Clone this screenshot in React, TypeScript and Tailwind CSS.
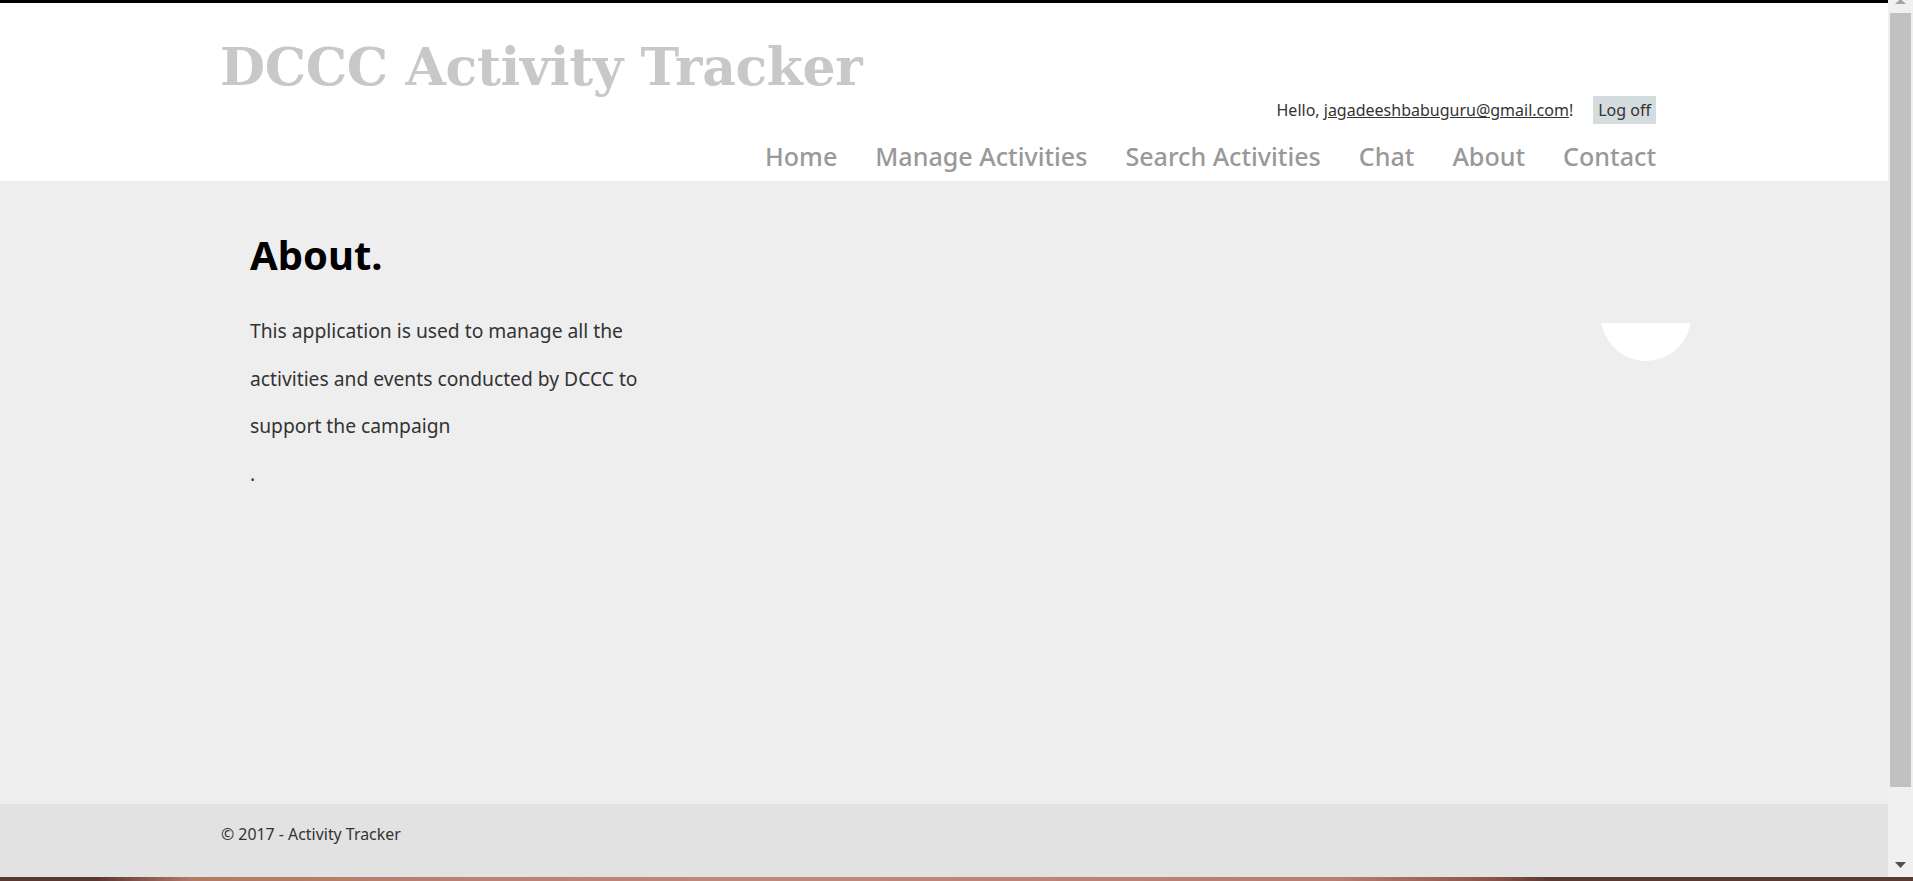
import React from 'react';

const sans = "font-['Noto_Sans',_'Open_Sans',_sans-serif]";

const navItems = ['Home', 'Manage Activities', 'Search Activities', 'Chat', 'About', 'Contact'];

function Scrollbar() {
  return (
    <div className="flex w-[25px] flex-col items-center bg-[#f0f0f0]">
      <div className="flex h-[13px] w-full items-start justify-center">
        <svg width="11" height="5" viewBox="0 0 11 5" className="-mt-[1px]">
          <path d="M0 5 L5.5 0 L11 5 Z" fill="#a3a3a3" />
        </svg>
      </div>
      <div className="h-[774px] w-[21px] bg-[#c1c1c1]" />
      <div className="flex flex-1 w-full items-end justify-center pb-[9px]">
        <svg width="11" height="6" viewBox="0 0 11 6">
          <path d="M0 0 L11 0 L5.5 6 Z" fill="#505050" />
        </svg>
      </div>
    </div>
  );
}

function Header() {
  return (
    <header className="h-[178px] bg-white pl-[220px] pr-[232px]">
      <div className="pt-[38px]">
        <h1 className="font-['DejaVu_Serif',_serif] text-[52px] font-bold leading-none text-[#c8c8c8] tracking-[-0.35px]">
          DCCC Activity Tracker
        </h1>
      </div>
      <div className={`mt-[3px] flex items-center justify-end text-[16px] text-[#333] ${sans}`}>
        <span>
          Hello, <a className="underline">jagadeeshbabuguru@gmail.com</a>!
        </span>
        <button className="ml-[20px] h-[28px] bg-[#d5dce0] px-[5px] text-[16px] text-[#333]">Log off</button>
      </div>
      <nav className={`mt-[14px] flex justify-end gap-[38px] text-[25.1px] font-medium leading-[36px] text-[#999] ${sans}`}>
        {navItems.map((item) => (
          <a key={item}>{item}</a>
        ))}
      </nav>
    </header>
  );
}

function Main() {
  return (
    <main className={`flex flex-1 bg-[#eeeeee] pl-[250px] pr-[197px] ${sans}`}>
      <div className="flex-1">
        <h2 className="mt-[54px] text-[40px] font-bold leading-none text-black">About.</h2>
        <p className="mt-[32px] text-[19.25px] leading-[47.5px] text-[#333]">
          This application is used to manage all the
          <br />
          activities and events conducted by DCCC to
          <br />
          support the campaign
          <br />.
        </p>
      </div>
      <div className="mt-[142px] h-[38px] w-[90px] overflow-hidden">
        <div className="-mt-[54px] h-[92px] w-[90px] rounded-full bg-white" />
      </div>
    </main>
  );
}

function Footer() {
  return (
    <footer className={`flex h-[73px] items-start bg-[#e2e2e2] pl-[221px] pt-[19px] text-[15.9px] text-[#333] ${sans}`}>
      <p>© 2017 - Activity Tracker</p>
    </footer>
  );
}

export default function App() {
  return (
    <div className="flex h-[881px] w-full flex-col overflow-hidden">
      <div className="flex h-[877px]">
        <div className="flex flex-1 flex-col">
          <div className="h-[3px] bg-black" />
          <Header />
          <Main />
          <Footer />
        </div>
        <Scrollbar />
      </div>
      <div className="h-[4px] bg-[linear-gradient(90deg,#5a3630_0%,#5a3630_5%,#b47a68_10%,#c08a78_40%,#b87e6e_70%,#8a5548_78%,#5c3a32_81%,#5c3a32_100%)]" />
    </div>
  );
}
